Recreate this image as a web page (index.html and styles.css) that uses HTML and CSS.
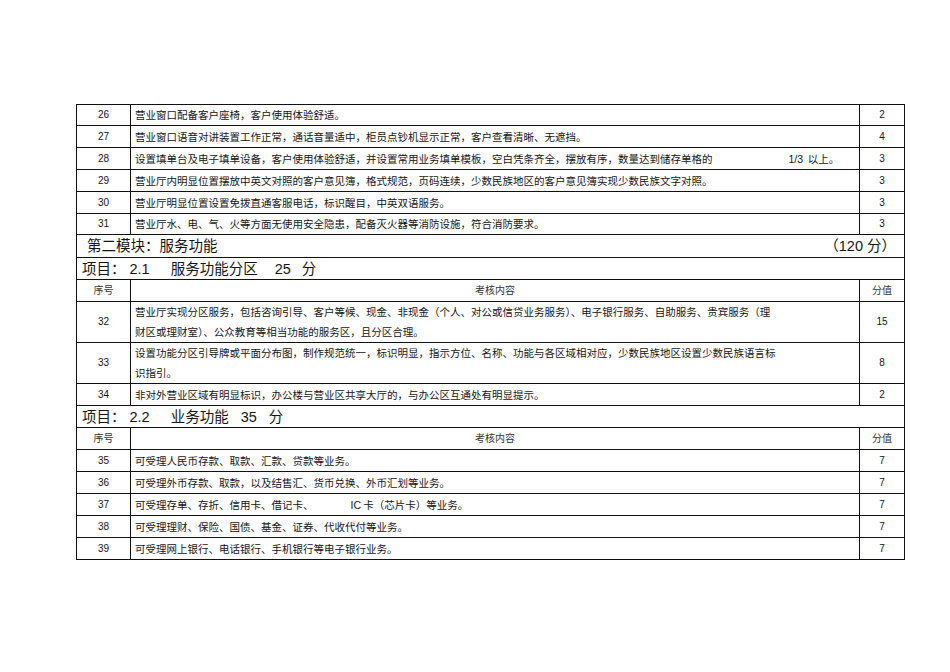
FILE: index.html
```html
<!DOCTYPE html>
<html lang="zh-CN">
<head>
<meta charset="utf-8">
<title>营业厅服务功能考核表</title>
<link rel="stylesheet" href="styles.css">
</head>
<body>
<div class="page">
<table class="sheet">
  <colgroup><col class="c-no"><col class="c-text"><col class="c-score"></colgroup>
  <tbody>
    <tr class="row short"><td class="no">26</td><td class="txt">营业窗口配备客户座椅，客户使用体验舒适。</td><td class="score">2</td></tr>
    <tr class="row"><td class="no">27</td><td class="txt">营业窗口语音对讲装置工作正常，通话音量适中，柜员点钞机显示正常，客户查看清晰、无遮挡。</td><td class="score">4</td></tr>
    <tr class="row"><td class="no">28</td><td class="txt">设置填单台及电子填单设备，客户使用体验舒适，并设置常用业务填单模板，空白凭条齐全，摆放有序，数量达到储存单格的<span class="tail"><span class="lat">1/3</span>&nbsp; 以上。</span></td><td class="score">3</td></tr>
    <tr class="row"><td class="no">29</td><td class="txt">营业厅内明显位置摆放中英文对照的客户意见簿，格式规范，页码连续，少数民族地区的客户意见簿实现少数民族文字对照。</td><td class="score">3</td></tr>
    <tr class="row"><td class="no">30</td><td class="txt">营业厅明显位置设置免拨直通客服电话，标识醒目，中英双语服务。</td><td class="score">3</td></tr>
    <tr class="row short"><td class="no">31</td><td class="txt">营业厅水、电、气、火等方面无使用安全隐患，配备灭火器等消防设施，符合消防要求。</td><td class="score">3</td></tr>
    <tr class="module"><td colspan="3"><div class="module-inner"><span>第二模块：服务功能</span><span>（<span class="lat">120</span> 分）</span></div></td></tr>
    <tr class="project"><td colspan="3"><div class="project-inner"><span>项目：</span><span class="lat p-num">2.1</span><span class="p-name">服务功能分区</span><span class="lat p-pts">25</span><span class="p-unit">分</span></div></td></tr>
    <tr class="head"><td class="no">序号</td><td class="mid">考核内容</td><td class="score">分值</td></tr>
    <tr class="row tall"><td class="no">32</td><td class="txt">营业厅实现分区服务，包括咨询引导、客户等候、现金、非现金（个人、对公或信贷业务服务）、电子银行服务、自助服务、贵宾服务（理<br>财区或理财室）、公众教育等相当功能的服务区，且分区合理。</td><td class="score">15</td></tr>
    <tr class="row tall"><td class="no">33</td><td class="txt">设置功能分区引导牌或平面分布图，制作规范统一，标识明显，指示方位、名称、功能与各区域相对应，少数民族地区设置少数民族语言标<br>识指引。</td><td class="score">8</td></tr>
    <tr class="row"><td class="no">34</td><td class="txt">非对外营业区域有明显标识，办公楼与营业区共享大厅的，与办公区互通处有明显提示。</td><td class="score">2</td></tr>
    <tr class="project"><td colspan="3"><div class="project-inner"><span>项目：</span><span class="lat p-num">2.2</span><span class="p-name2">业务功能</span><span class="lat p-pts2">35</span><span class="p-unit2">分</span></div></td></tr>
    <tr class="head"><td class="no">序号</td><td class="mid">考核内容</td><td class="score">分值</td></tr>
    <tr class="row"><td class="no">35</td><td class="txt">可受理人民币存款、取款、汇款、贷款等业务。</td><td class="score">7</td></tr>
    <tr class="row"><td class="no">36</td><td class="txt">可受理外币存款、取款，以及结售汇、货币兑换、外币汇划等业务。</td><td class="score">7</td></tr>
    <tr class="row"><td class="no">37</td><td class="txt">可受理存单、存折、信用卡、借记卡、<span class="ic"><span class="lat">IC</span> 卡（芯片卡）等业务。</span></td><td class="score">7</td></tr>
    <tr class="row"><td class="no">38</td><td class="txt">可受理理财、保险、国债、基金、证券、代收代付等业务。</td><td class="score">7</td></tr>
    <tr class="row"><td class="no">39</td><td class="txt">可受理网上银行、电话银行、手机银行等电子银行业务。</td><td class="score">7</td></tr>
  </tbody>
</table>
</div>
</body>
</html>
```

FILE: styles.css
```css
html, body {
  margin: 0;
  padding: 0;
  background: #ffffff;
}

body {
  font-family: "Liberation Sans", "Noto Sans CJK SC", sans-serif;
  color: #141414;
}

.page {
  padding: 104px 0 0 76px;
}

.sheet {
  width: 828px;
  border-collapse: collapse;
  table-layout: fixed;
}

.c-no { width: 54px; }
.c-text { width: 729px; }
.c-score { width: 45px; }

.sheet td {
  border: 1px solid #111111;
  padding: 0;
  vertical-align: middle;
  white-space: nowrap;
}

.row td {
  height: 21px;
  font-size: 10.5px;
  line-height: 14px;
}

.row.short td {
  height: 20px;
}

.row.tall td {
  height: 40px;
  line-height: 20px;
}

.no {
  text-align: center;
}

.row td.no,
.row td.score {
  font-size: 10px;
}

.score {
  text-align: center;
}

.sheet td.txt {
  padding-left: 4px;
  font-family: "Noto Sans CJK SC", sans-serif;
}

.lat {
  font-family: "Liberation Sans", sans-serif;
}

.tail {
  margin-left: 76px;
}

.ic {
  margin-left: 37px;
}

.module td {
  height: 22px;
  font-size: 14.5px;
  line-height: 18px;
}

.module-inner {
  display: flex;
  justify-content: space-between;
  padding: 0 8px 0 10px;
}

.project td {
  height: 21px;
  font-size: 14.5px;
  line-height: 18px;
}

.project-inner {
  display: flex;
  align-items: baseline;
  padding-left: 5px;
}

.p-num { margin-left: 4px; }
.p-name { margin-left: 21px; }
.p-pts { margin-left: 17px; }
.p-unit { margin-left: 11px; }
.p-name2 { margin-left: 21px; }
.p-pts2 { margin-left: 12px; }
.p-unit2 { margin-left: 12px; }

.head td {
  height: 21px;
  font-size: 10px;
  line-height: 14px;
  color: #333333;
}

.mid {
  text-align: center;
}
```
